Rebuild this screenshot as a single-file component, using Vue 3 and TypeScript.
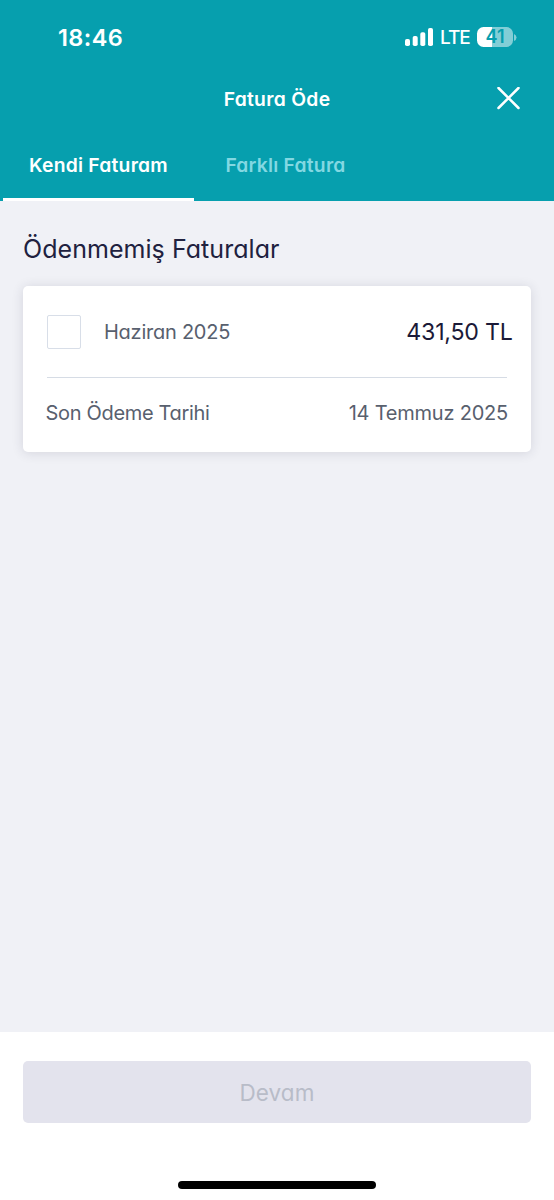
<script setup lang="ts">
import { ref } from 'vue'

interface Invoice {
  period: string
  amount: string
  dueDate: string
}

const tabs: string[] = ['Kendi Faturam', 'Farklı Fatura']
const activeTab = ref(0)
const invoices: Invoice[] = [
  { period: 'Haziran 2025', amount: '431,50 TL', dueDate: '14 Temmuz 2025' },
]
const selected = ref<string[]>([])
</script>

<template>
  <div class="screen">
    <header class="top">
      <div class="status">
        <span class="time">18:46</span>
        <div class="indicators">
          <svg class="signal" width="28" height="18" viewBox="0 0 28 18" fill="#fff">
            <rect x="0" y="11" width="5" height="7" rx="1.8" />
            <rect x="7.7" y="8" width="5" height="10" rx="1.8" />
            <rect x="15.3" y="4.3" width="5" height="13.7" rx="1.8" />
            <rect x="23" y="0" width="5" height="18" rx="1.8" />
          </svg>
          <span class="network">LTE</span>
          <div class="battery">
            <div class="cell"><span class="level">41</span></div>
            <svg width="3" height="7" viewBox="0 0 3 7"><path d="M0 0Q2.5 1 2.5 3.5T0 7Z" fill="#82ced6" /></svg>
          </div>
        </div>
      </div>
      <div class="titlebar">
        <h1 class="title">Fatura Öde</h1>
        <button class="close" aria-label="Kapat">
          <svg width="24" height="24" viewBox="0 0 24 24">
            <path d="M1.5 1L21.5 21M21.5 1L1.5 21" stroke="#fff" stroke-width="2.5" stroke-linecap="round" fill="none" />
          </svg>
        </button>
      </div>
      <nav class="tabs">
        <button
          v-for="(tab, i) in tabs"
          :key="tab"
          class="tab"
          :class="{ active: activeTab === i }"
          @click="activeTab = i"
        >{{ tab }}</button>
      </nav>
    </header>

    <main class="content">
      <h2 class="heading">Ödenmemiş Faturalar</h2>
      <article v-for="invoice in invoices" :key="invoice.period" class="card">
        <label class="summary">
          <input v-model="selected" class="check" type="checkbox" :value="invoice.period" />
          <span class="period">{{ invoice.period }}</span>
          <span class="amount">{{ invoice.amount }}</span>
        </label>
        <div class="due">
          <span class="due-label">Son Ödeme Tarihi</span>
          <span class="due-date">{{ invoice.dueDate }}</span>
        </div>
      </article>
    </main>

    <footer class="footer">
      <button class="continue" :disabled="selected.length === 0">Devam</button>
      <div class="home"></div>
    </footer>
  </div>
</template>

<style>
body {
  margin: 0;
}
</style>

<style scoped>
.screen {
  display: flex;
  flex-direction: column;
  width: 554px;
  height: 1200px;
  overflow: hidden;
  background: #f0f1f6;
  font-family: Inter, "Liberation Sans", sans-serif;
  font-feature-settings: "cv11" 1;
}
button {
  border: 0;
  padding: 0;
  background: none;
  font: inherit;
  font-feature-settings: inherit;
}
.top {
  height: 201px;
  box-sizing: border-box;
  background: #069fae;
  color: #fff;
  display: flex;
  flex-direction: column;
}
.status {
  height: 74px;
  box-sizing: border-box;
  padding: 0 37px 0 58px;
  display: flex;
  align-items: center;
  justify-content: space-between;
}
.time {
  font-size: 23.5px;
  font-weight: 600;
  letter-spacing: 0.4px;
}
.indicators {
  display: flex;
  align-items: center;
}
.network {
  margin-left: 7px;
  width: 37px;
  font-size: 19px;
  font-weight: 500;
  letter-spacing: -1px;
}
.battery {
  display: flex;
  align-items: center;
  gap: 1px;
}
.cell {
  width: 36px;
  height: 20px;
  border-radius: 6.5px;
  background: linear-gradient(to right, #fff 42%, #82ced6 42%);
  color: #069fae;
  display: flex;
  align-items: center;
  justify-content: center;
}
.level {
  font-size: 18px;
  line-height: 20px;
  font-weight: 600;
}
.titlebar {
  height: 49px;
  display: grid;
  grid-template-columns: 46px 1fr 46px;
  align-items: center;
  padding: 0 33.5px;
}
.title {
  grid-column: 2;
  margin: 0;
  text-align: center;
  font-size: 19.3px;
  font-weight: 600;
  letter-spacing: 0.3px;
}
.close {
  display: flex;
  justify-content: flex-end;
}
.tabs {
  flex: 1;
  display: flex;
  padding-left: 3px;
}
.tab {
  width: 191px;
  padding-top: 9px;
  box-sizing: border-box;
  border-bottom: 3px solid transparent;
  font-size: 19.3px;
  font-weight: 600;
  letter-spacing: 0.23px;
  color: #83d8e2;
  white-space: nowrap;
}
.tab + .tab {
  width: 183px;
}
.tab.active {
  color: #fff;
  border-color: #fff;
}
.content {
  flex: 1;
  padding: 0 23px;
}
.heading {
  margin: 0;
  height: 85px;
  line-height: 97px;
  font-size: 25px;
  font-weight: 400;
  letter-spacing: 0.05px;
  color: #20213f;
  white-space: nowrap;
}
.card {
  height: 166px;
  box-sizing: border-box;
  border-radius: 5px;
  background: #fff;
  box-shadow: 0 1px 12px rgba(40, 42, 70, 0.14);
}
.summary {
  margin: 0 24px;
  height: 92px;
  box-sizing: border-box;
  border-bottom: 1px solid #d6dce5;
  display: flex;
  align-items: center;
}
.check {
  appearance: none;
  margin: 0;
  width: 34px;
  height: 34px;
  box-sizing: border-box;
  border: 1px solid #d8dee8;
  border-radius: 2px;
  background: #fff;
}
.period {
  margin-left: 23px;
  font-size: 20px;
  letter-spacing: -0.25px;
  color: #58606e;
}
.amount {
  margin-left: auto;
  margin-right: -5.5px;
  font-size: 23.2px;
  font-weight: 400;
  letter-spacing: -0.25px;
  color: #1b1a38;
}
.due {
  height: 70px;
  padding: 0 23px 0 22.5px;
  display: flex;
  align-items: center;
  justify-content: space-between;
  font-size: 20px;
  color: #58606e;
}
.due-label {
  letter-spacing: -0.32px;
}
.due-date {
  letter-spacing: -0.22px;
}
.footer {
  height: 168px;
  box-sizing: border-box;
  padding: 29px 23px 0;
  background: #fff;
  display: flex;
  flex-direction: column;
  align-items: center;
}
.continue {
  width: 508px;
  height: 62px;
  border-radius: 5px;
  background: #e3e3ed;
  color: #b8bcc8;
  font-size: 22.5px;
  letter-spacing: 0.1px;
}
.home {
  margin-top: 58px;
  width: 198px;
  height: 8px;
  border-radius: 4px;
  background: #000;
}
</style>
